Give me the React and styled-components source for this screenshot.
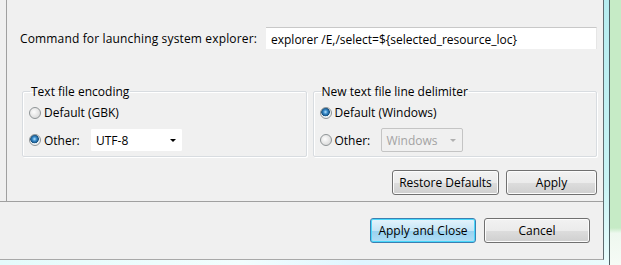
import React from 'react';
import styled, {createGlobalStyle} from 'styled-components';

const Global=createGlobalStyle`
  html,body{margin:0;padding:0;background:#f0f0f0;overflow:hidden;}
  *{box-sizing:border-box;}
`;

const Screen=styled.div`
  display:flex;
  width:621px;
  height:265px;
  font-family:'Open Sans','Noto Sans',sans-serif;
  font-size:12px;
  color:#000;
`;

const LeftColumn=styled.div`
  display:flex;
  flex-direction:column;
  width:604px;
`;

const Dialog=styled.div`
  display:flex;
  flex-direction:column;
  height:260px;
  background:#f0f0f0;
  border-right:1px solid #5f6b70;
  border-bottom:1px solid #a8a8a8;
`;

const Desktop=styled.div`
  flex:1;
  background:linear-gradient(90deg,#e4fbfb,#f2fefe 40%,#dff6ff 60%,#eafcfc);
`;

const Frame=styled.div`
  display:flex;
  flex:1;
`;

const FrameStripe=styled.div`
  width:6px;
  background:linear-gradient(180deg,#b6ecef,#c9f3f4 70%,#eafdfd);
  border-right:1px solid #4f6065;
`;

const Outside=styled.div`
  flex:1;
  background:linear-gradient(180deg,#c6ebc6 0,#c6ebc6 86%,#eef8ef 88%,#f6fbf6);
`;

const Page=styled.div`
  height:202px;
  padding-left:6px;
  border-bottom:1px solid #a0a0a0;
`;

const Panel=styled.div`
  display:flex;
  flex-direction:column;
  height:100%;
  border-left:1px solid #a0a0a0;
  padding:27px 6px 0 13px;
`;

const CommandRow=styled.div`
  display:flex;
  align-items:center;
  height:22px;
`;

const Label=styled.span`
  width:246px;
  white-space:nowrap;
  letter-spacing:0.15px;
`;

const TextInput=styled.div`
  flex:1;
  height:22px;
  background:#fff;
  border-top:1px solid #c8c8c8;
  border-right:1px solid #e6e6e6;
  padding:3px 0 0 5px;
  white-space:nowrap;
`;

const Groups=styled.div`
  display:flex;
  gap:6px;
  margin:35px 0 0 2px;
`;

const Group=styled.fieldset`
  flex:1;
  margin:0;
  height:73px;
  border:1px solid #d8dce0;
  box-shadow:inset 1px 1px 0 #fff,1px 1px 0 #fff;
  border-radius:2px;
  padding:0 0 0 6px;
  display:flex;
  flex-direction:column;
  gap:6px;
`;

const Legend=styled.legend`
  padding:0 1px;
  margin-left:1px;
  line-height:15px;
`;

const OptionRow=styled.div`
  display:flex;
  align-items:center;
  height:${p=>p.$tall?'24px':'19px'};
  margin-top:${p=>p.$first?'4px':'0'};
`;

const RadioDot=styled.span`
  width:12px;
  height:12px;
  border-radius:50%;
  margin-right:3px;
  border:1px solid #8f9496;
  background:${p=>p.$checked
    ?'radial-gradient(circle at 45% 40%,#b8e6ff 0,#3a8ccc 2px,#15507f 4px,#e8eef2 4.6px,#f4f4f4 100%)'
    :'radial-gradient(circle at 40% 40%,#fdfdfd 0,#e2e2e2 5px,#d0d0d0 100%)'};
`;

const OtherLabel=styled.span`
  width:46px;
`;

const Combo=styled.div`
  display:flex;
  align-items:center;
  justify-content:space-between;
  width:${p=>p.$w}px;
  height:24px;
  padding:0 6px 0 5px;
  background:${p=>p.$disabled?'#f0f0f0':'#fff'};
  border:${p=>p.$disabled?'1px solid #c4c4c4':'1px solid #f0f0f0'};
  border-radius:2px;
  color:${p=>p.$disabled?'#a3a3a3':'#000'};
`;

const Arrow=styled.span`
  width:0;
  height:0;
  border-left:3px solid transparent;
  border-right:3px solid transparent;
  border-top:3px solid ${p=>p.$disabled?'#b0b0b0':'#000'};
`;

const ButtonRow=styled.div`
  display:flex;
  justify-content:flex-end;
  gap:7px;
  margin-top:13px;
`;

const Button=styled.div`
  display:flex;
  align-items:center;
  justify-content:center;
  width:${p=>p.$w}px;
  height:25px;
  border:1px solid ${p=>p.$focus?'#3c7fb1':'#707070'};
  border-radius:3px;
  box-shadow:inset 0 0 0 1px ${p=>p.$focus?'#48d8fb':'#fcfcfc'};
  background:${p=>p.$focus
    ?'linear-gradient(180deg,#e5f4fc 0,#c4e5f6 50%,#98d1ef 51%,#b1def5 100%)'
    :'linear-gradient(180deg,#f2f2f2 0,#ebebeb 50%,#dddddd 51%,#cfcfcf 100%)'};
  white-space:nowrap;
`;

const ButtonBar=styled.div`
  flex:1;
  display:flex;
  align-items:flex-start;
  justify-content:flex-end;
  padding:16px 13px 0 0;
  gap:8px;
`;

function Radio({checked,children}){
  return (
    <>
      <RadioDot $checked={checked}/>
      {children}
    </>
  );
}

export default function App(){
  return (
    <Screen>
      <Global/>
      <LeftColumn>
        <Dialog>
          <Page>
            <Panel>
              <CommandRow>
                <Label>Command for launching system explorer:</Label>
                <TextInput>explorer /E,/select=${'{'}selected_resource_loc{'}'}</TextInput>
              </CommandRow>
              <Groups>
                <Group>
                  <Legend>Text file encoding</Legend>
                  <OptionRow $first><Radio>Default (GBK)</Radio></OptionRow>
                  <OptionRow $tall>
                    <Radio checked><OtherLabel>Other:</OtherLabel></Radio>
                    <Combo $w={93}>UTF-8<Arrow/></Combo>
                  </OptionRow>
                </Group>
                <Group>
                  <Legend>New text file line delimiter</Legend>
                  <OptionRow $first><Radio checked>Default (Windows)</Radio></OptionRow>
                  <OptionRow $tall>
                    <Radio><OtherLabel>Other:</OtherLabel></Radio>
                    <Combo $w={82} $disabled>Windows<Arrow $disabled/></Combo>
                  </OptionRow>
                </Group>
              </Groups>
              <ButtonRow>
                <Button $w={107}>Restore Defaults</Button>
                <Button $w={91}>Apply</Button>
              </ButtonRow>
            </Panel>
          </Page>
          <ButtonBar>
            <Button $w={106} $focus>Apply and Close</Button>
            <Button $w={106}>Cancel</Button>
          </ButtonBar>
        </Dialog>
        <Desktop/>
      </LeftColumn>
      <Frame>
        <FrameStripe/>
        <Outside/>
      </Frame>
    </Screen>
  );
}
